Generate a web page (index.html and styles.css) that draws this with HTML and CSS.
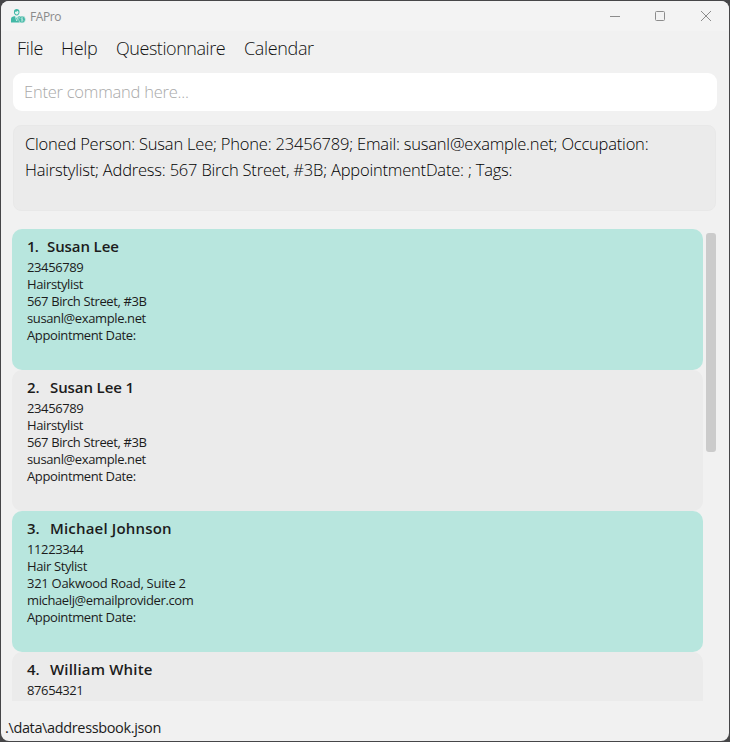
FILE: index.html
```html
<!DOCTYPE html>
<html lang="en">
<head>
<meta charset="utf-8">
<title>FAPro</title>
<link rel="stylesheet" href="styles.css">
</head>
<body>
<div class="window">
  <header class="titlebar">
    <svg class="logo" width="15" height="14" viewBox="0 0 15 14">
      <path d="M2.9 3.2C2.8 1 4 0 5.7 0s3 1 2.8 3.2c-.1 1.800-1.200 3.300-2.800 3.300S3 5 2.900 3.200Z" fill="#42b8a6"/>
      <path d="M3.900 2.700c1.500.1 2.300-.5 2.700-1 .3.600.6.900 1 1C7.500 4.500 6.800 5.500 5.700 5.500S4 4.500 3.900 2.700Z" fill="#e4f4f1"/>
      <path d="M0 13.500V10c0-1.800 1.600-2.300 3.800-2.900L5.700 9l1.900-1.900c1.600.4 2.900.8 3.400 1.700L8.500 13.500Z" fill="#42b8a6"/>
      <path d="m4.100 7 1.600 5 1.600-5" fill="none" stroke="#d9f1ed" stroke-width=".7"/>
      <circle cx="11" cy="10.500" r="3.400" fill="#42b8a6" stroke="#f3f3f3" stroke-width=".5"/>
      <path d="M12 9.200c-.7-.6-2-.4-2 .4 0 1 2.100.6 2.100 1.600 0 .9-1.500 1-2.200.4M11 8.300v4.400" fill="none" stroke="#d9f1ed" stroke-width=".6"/>
    </svg>
    <span class="app-name">FAPro</span>
    <svg class="controls" width="104" height="12" viewBox="0 0 104 12">
      <g fill="none" stroke="#8c8c8c">
        <path d="M0 6.500h10"/>
        <rect x="45.500" y="1.500" width="9" height="9" rx="1"/>
        <path d="m91 1 10 10M101 1 91 11"/>
      </g>
    </svg>
  </header>
  <nav class="menu">
    <span class="m-file">File</span><span class="m-help">Help</span><span class="m-quest">Questionnaire</span><span class="m-cal">Calendar</span>
  </nav>
  <div class="command"><span>Enter command here...</span></div>
  <div class="result">
    <div class="line-one">Cloned Person: Susan Lee; Phone: 23456789; Email: susanl@example.net; Occupation:</div>
    <div class="line-two">Hairstylist; Address: 567 Birch Street, #3B; AppointmentDate: ; Tags:</div>
  </div>
  <main class="list-area">
    <div class="list">
      <article class="card odd">
        <h2><span class="num">1.</span><span>Susan Lee</span></h2>
        <p>23456789</p><p>Hairstylist</p><p>567 Birch Street, #3B</p><p>susanl@example.net</p><p>Appointment Date:</p>
      </article>
      <article class="card">
        <h2><span class="num wide">2.</span><span>Susan Lee 1</span></h2>
        <p>23456789</p><p>Hairstylist</p><p>567 Birch Street, #3B</p><p>susanl@example.net</p><p>Appointment Date:</p>
      </article>
      <article class="card odd">
        <h2><span class="num wide">3.</span><span class="long">Michael Johnson</span></h2>
        <p>11223344</p><p>Hair Stylist</p><p class="street">321 Oakwood Road, Suite 2</p><p>michaelj@emailprovider.com</p><p>Appointment Date:</p>
      </article>
      <article class="card">
        <h2><span class="num wide">4.</span><span class="long">William White</span></h2>
        <p>87654321</p>
      </article>
    </div>
    <div class="scrollbar"></div>
  </main>
  <footer class="status"><span>.\data\addressbook.json</span></footer>
</div>
</body>
</html>
```
FILE: styles.css
```css
* { box-sizing: border-box; }
body {
  margin: 0;
  padding: 1px;
  height: 742px;
  overflow: hidden;
  background: #464648;
  font-family: "Open Sans", "Noto Sans", sans-serif;
  color: #1c1c1c;
  white-space: nowrap;
}
.window {
  width: 728px;
  height: 740px;
  border-radius: 8px;
  background: #f1f1f1;
  overflow: hidden;
  display: flex;
  flex-direction: column;
}
.titlebar {
  height: 30px;
  flex: none;
  background: #f3f3f3;
  display: flex;
  align-items: center;
  padding: 0 15px 0 10px;
}
.app-name { margin-left: 4px; font-size: 12px; letter-spacing: -0.4px; color: #8a8a8a; }
.controls { margin-left: auto; }
.menu {
  height: 42px;
  flex: none;
  padding: 0 0 8px 16px;
  display: flex;
  align-items: center;
  font-size: 18px;
  font-weight: 300;
  color: #111;
}
.menu span { flex: none; }
.m-file { width: 44px; letter-spacing: -0.2px; }
.m-help { width: 55px; letter-spacing: -0.3px; }
.m-quest { width: 128px; letter-spacing: -0.45px; }
.m-cal { letter-spacing: -0.35px; }
.command {
  height: 38px;
  flex: none;
  margin: 0 12px;
  padding-left: 11px;
  border-radius: 9px;
  background: #fff;
  color: #a9a9a9;
  font-size: 16.5px;
  font-weight: 300;
  line-height: 38px;
  letter-spacing: -0.23px;
}
.result {
  height: 86px;
  flex: none;
  margin: 14px 13px 0 12px;
  padding: 5px 11px;
  border: 1px solid #e8e8e8;
  border-radius: 8px;
  background: #ebebeb;
  color: #000;
  font-size: 16.5px;
  font-weight: 300;
  line-height: 26px;
  letter-spacing: -0.2px;
}
.list-area {
  height: 472px;
  flex: none;
  margin: 18px 13px 0 11px;
  display: flex;
  overflow: hidden;
}
.list { width: 691px; flex: none; }
.card {
  height: 141px;
  padding: 8px 15px;
  border-radius: 10px;
  background: #ebebeb;
}
.card.odd { background: #b8e6de; }
h2 { margin: 0 0 4px; font-size: 15px; font-weight: 600; line-height: 18px; height: 18px; display: flex; letter-spacing: -0.1px; }
.long { letter-spacing: 0.18px; }
.num { width: 20px; letter-spacing: -0.8px; }
.num.wide { width: 23px; letter-spacing: 0; }
p { margin: 0; font-size: 13px; line-height: 17px; letter-spacing: -0.38px; }
.street { letter-spacing: -0.28px; }
.scrollbar { width: 10px; height: 219px; margin: 4px 0 0 3px; border-radius: 3px; background: #cbcbcb; }
.status { flex: 1; padding-left: 4px; font-size: 14.5px; line-height: 53px; letter-spacing: -0.36px; }
```
